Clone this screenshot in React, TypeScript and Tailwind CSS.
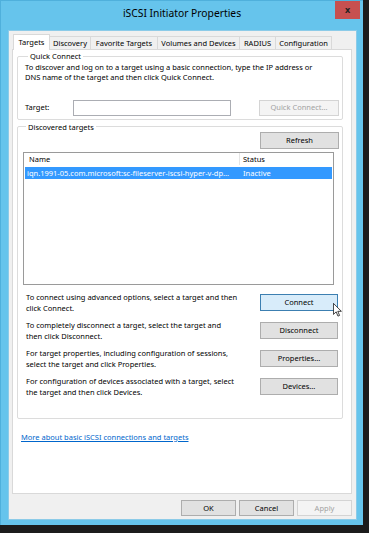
import React from "react";

const tabs = [
  { label: "Targets", w: "w-[37px]", active: true },
  { label: "Discovery", w: "w-[42px]" },
  { label: "Favorite Targets", w: "w-[68px]" },
  { label: "Volumes and Devices", w: "w-[83px]" },
  { label: "RADIUS", w: "w-[37px]" },
  { label: "Configuration", w: "w-[57px]" },
];

const actions = [
  {
    text: ["To connect using advanced options, select a target and then", "click Connect."],
    button: "Connect",
    hover: true,
  },
  {
    text: ["To completely disconnect a target, select the target and", "then click Disconnect."],
    button: "Disconnect",
  },
  {
    text: ["For target properties, including configuration of sessions,", "select the target and click Properties."],
    button: "Properties...",
  },
  {
    text: ["For configuration of devices associated with a target, select", "the target and then click Devices."],
    button: "Devices...",
  },
];

function Cursor() {
  return (
    <svg width="9" height="14" viewBox="0 0 12 19" className="absolute left-[72px] top-[8px]">
      <path
        d="M0.5 0.5 L0.5 15.5 L4.2 12 L6.6 17.8 L8.8 16.9 L6.4 11.3 L11.3 11.3 Z"
        fill="#ffffff"
        stroke="#000000"
        strokeWidth="1"
        strokeLinejoin="round"
      />
    </svg>
  );
}

function Btn({ label, hover, disabled, className = "" }: { label: string; hover?: boolean; disabled?: boolean; className?: string }) {
  const look = hover
    ? "bg-[#d8ecfa] border-[#3c7fb1] text-black"
    : disabled
      ? "bg-[#f4f4f4] border-[#d4d4d4] text-[#a3a3a3]"
      : "bg-[#e1e1e1] border-[#adadad] text-black";
  return (
    <div className={`relative flex items-center justify-center border ${look} ${className}`}>
      {label}
      {hover && <Cursor />}
    </div>
  );
}

export default function App() {
  return (
    <div className="w-[369px] h-[533px] bg-[#1c1c1c] font-['Segoe_UI','Noto_Sans',sans-serif] text-[7.5px] leading-[10.5px] text-black">
      <div className="w-[363px] h-[525px] bg-[#66c4ec] border-l border-t border-[#4fb0dc] flex flex-col">
        <div className="h-[29px] grid grid-cols-[1fr_auto_1fr]">
          <div />
          <div className="pt-[6px] text-[10.3px] leading-[13px] text-black">iSCSI Initiator Properties</div>
          <div className="flex justify-end pr-[3px]">
            <div className="w-[25px] h-[18px] bg-[#c75050] flex items-center justify-center text-[9px] font-bold text-[#222]">
              x
            </div>
          </div>
        </div>

        <div className="ml-[7px] mr-[6px] h-[490px] bg-[#f0f0f0] border border-[#8ccbe8] flex flex-col px-[3px] pt-[2px]">
          <div className="flex items-end pl-[1px] h-[16px]">
            {tabs.map((t) =>
              t.active ? (
                <div
                  key={t.label}
                  className={`${t.w} h-[16px] -mb-px relative z-10 bg-white border border-b-0 border-[#d9d9d9] flex items-center justify-center pb-[1px]`}
                >
                  {t.label}
                </div>
              ) : (
                <div
                  key={t.label}
                  className={`${t.w} h-[13px] -ml-px bg-[#f0f0f0] border border-b-0 border-[#d9d9d9] flex items-center justify-center whitespace-nowrap`}
                >
                  {t.label}
                </div>
              )
            )}
          </div>

          <div className="w-[340px] h-[445px] bg-white border border-[#d9d9d9] flex flex-col pl-[4px] pt-[1px]">
            <fieldset className="w-[326px] border border-[#dcdcdc] rounded-[2px] pl-[7px] pr-[3px] pb-[3px]">
              <legend className="ml-[3px] px-[2px]">Quick Connect</legend>
              <div>
                <div>To discover and log on to a target using a basic connection, type the IP address or</div>
                <div>DNS name of the target and then click Quick Connect.</div>
              </div>
              <div className="mt-[17px] flex items-center h-[16px]">
                <div className="w-[48px]">Target:</div>
                <div className="w-[158px] h-[16px] bg-white border border-[#abadb3]" />
                <Btn label="Quick Connect..." disabled className="ml-auto w-[80px] h-[16px]" />
              </div>
            </fieldset>

            <fieldset className="mt-[2px] w-[326px] border border-[#dcdcdc] rounded-[2px] pl-[5px] pr-[3px] pb-[14px]">
              <legend className="ml-[3px] px-[2px]">Discovered targets</legend>
              <div className="flex justify-end">
                <Btn label="Refresh" className="w-[79px] h-[17px]" />
              </div>
              <div className="mt-[3px] mr-[5px] h-[133px] border border-[#9a9a9a] bg-white px-px">
                <div className="flex h-[12px] items-center">
                  <div className="w-[215px] h-full pl-[4px] flex items-center border-r border-[#e5e5e5]">Name</div>
                  <div className="pl-[3px]">Status</div>
                </div>
                <div className="mt-[2px] flex h-[12px] items-center bg-[#3399ff] text-white">
                  <div className="w-[215px] pl-[2px] whitespace-nowrap overflow-hidden">
                    iqn.1991-05.com.microsoft:sc-fileserver-iscsi-hyper-v-dp...
                  </div>
                  <div className="pl-[3px]">Inactive</div>
                </div>
              </div>

              <div className="mt-[7px] flex flex-col">
                {actions.map((a) => (
                  <div key={a.button} className="h-[28px] flex items-start pl-[3px]">
                    <div className="flex-1 leading-[11px]">
                      <div>{a.text[0]}</div>
                      <div>{a.text[1]}</div>
                    </div>
                    <Btn label={a.button} hover={a.hover} className="mt-[2px] mr-[1px] w-[78px] h-[17px]" />
                  </div>
                ))}
              </div>
            </fieldset>

            <div className="mt-[13px] pl-[4px] text-[#0066cc] underline">More about basic iSCSI connections and targets</div>
          </div>

          <div className="mt-[6px] flex justify-end gap-[3px] pr-[1px]">
            <Btn label="OK" className="w-[55px] h-[16px]" />
            <Btn label="Cancel" className="w-[55px] h-[16px]" />
            <Btn label="Apply" disabled className="w-[55px] h-[16px]" />
          </div>
        </div>
      </div>
    </div>
  );
}
